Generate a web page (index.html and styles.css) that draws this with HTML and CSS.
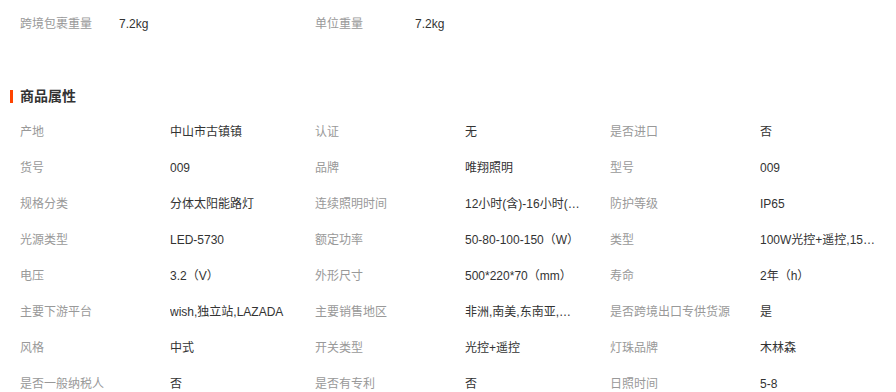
FILE: index.html
```html
<!DOCTYPE html>
<html lang="zh-CN">
<head>
<meta charset="utf-8">
<title>商品属性</title>
<link rel="stylesheet" href="styles.css">
</head>
<body>
<div class="page">
  <div class="weights">
    <span class="wl">跨境包裹重量</span><span class="wv">7.2kg</span>
    <span class="wl">单位重量</span><span class="wv">7.2kg</span>
  </div>
  <h2 class="title">商品属性</h2>
  <div class="attrs">
    <span class="l">产地</span><span class="v">中山市古镇镇</span>
    <span class="l">认证</span><span class="v">无</span>
    <span class="l">是否进口</span><span class="v">否</span>

    <span class="l">货号</span><span class="v">009</span>
    <span class="l">品牌</span><span class="v">唯翔照明</span>
    <span class="l">型号</span><span class="v">009</span>

    <span class="l">规格分类</span><span class="v">分体太阳能路灯</span>
    <span class="l">连续照明时间</span><span class="v">12小时(含)-16小时(含)</span>
    <span class="l">防护等级</span><span class="v">IP65</span>

    <span class="l">光源类型</span><span class="v">LED-5730</span>
    <span class="l">额定功率</span><span class="v">50-80-100-150（W）</span>
    <span class="l">类型</span><span class="v">100W光控+遥控,150W光控+遥控</span>

    <span class="l">电压</span><span class="v">3.2（V）</span>
    <span class="l">外形尺寸</span><span class="v">500*220*70（mm）</span>
    <span class="l">寿命</span><span class="v">2年（h）</span>

    <span class="l">主要下游平台</span><span class="v">wish,独立站,LAZADA</span>
    <span class="l">主要销售地区</span><span class="v">非洲,南美,东南亚,东欧</span>
    <span class="l">是否跨境出口专供货源</span><span class="v">是</span>

    <span class="l">风格</span><span class="v">中式</span>
    <span class="l">开关类型</span><span class="v">光控+遥控</span>
    <span class="l">灯珠品牌</span><span class="v">木林森</span>

    <span class="l">是否一般纳税人</span><span class="v">否</span>
    <span class="l">是否有专利</span><span class="v">否</span>
    <span class="l">日照时间</span><span class="v">5-8</span>
  </div>
</div>
</body>
</html>
```

FILE: styles.css
```css
* { box-sizing: border-box; }
html, body { margin: 0; padding: 0; background: #fff; }
body {
  font-family: "Liberation Sans", "Noto Sans CJK SC", sans-serif;
  font-size: 12px;
  color: #333;
  overflow: hidden;
}
.page { padding: 6px 0 0 0; }
.weights {
  display: grid;
  grid-template-columns: 99px 196px 100px 200px;
  padding-left: 20px;
  line-height: 36px;
  height: 36px;
}
.wl { color: #999; }
.wv { color: #333; }
.title {
  margin: 47px 0 0 10px;
  height: 14px;
  line-height: 14px;
  font-size: 14px;
  font-weight: bold;
  color: #333;
}
.title::before {
  content: "";
  display: inline-block;
  width: 3px;
  height: 13px;
  background: #ff4400;
  margin-right: 7px;
  vertical-align: -2px;
}
.attrs {
  margin-top: 11px;
  padding-left: 20px;
  display: grid;
  grid-template-columns: 150px 145px 150px 145px 150px 140px;
  grid-auto-rows: 36px;
  line-height: 36px;
}
.l { color: #999; white-space: nowrap; }
.v {
  color: #333;
  white-space: nowrap;
  overflow: hidden;
  text-overflow: ellipsis;
  max-width: 117.6px;
}
```
